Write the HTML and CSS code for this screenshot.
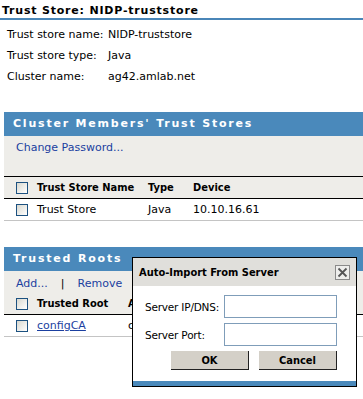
FILE: index.html
```html
<!DOCTYPE html>
<html>
<head>
<meta charset="utf-8">
<link rel="stylesheet" href="styles.css">
</head>
<body>
<div class="page">
  <h1 class="title">Trust Store: NIDP-truststore</h1>
  <div class="props">
    <div class="prop"><span class="label">Trust store name:</span><span class="value">NIDP-truststore</span></div>
    <div class="prop"><span class="label">Trust store type:</span><span class="value">Java</span></div>
    <div class="prop"><span class="label">Cluster name:</span><span class="value">ag42.amlab.net</span></div>
  </div>

  <section class="panel panel-cluster">
    <div class="panel-head">Cluster Members' Trust Stores</div>
    <div class="toolbar toolbar-tall"><a class="link">Change Password...</a></div>
    <div class="row head bordered">
      <span class="cb"></span><span class="c1">Trust Store Name</span><span class="c2">Type</span><span class="c3">Device</span>
    </div>
    <div class="row data">
      <span class="cb"></span><span class="c1">Trust Store</span><span class="c2">Java</span><span class="c3">10.10.16.61</span>
    </div>
  </section>

  <section class="panel panel-roots">
    <div class="panel-head">Trusted Roots</div>
    <div class="toolbar"><a class="link">Add...</a><span class="sep">|</span><a class="link">Remove</a><span class="sep">|</span></div>
    <div class="row head">
      <span class="cb"></span><span class="r1">Trusted Root</span><span class="r2">Alias</span>
    </div>
    <div class="row data">
      <span class="cb"></span><span class="r1"><a class="link ul">configCA</a></span><span class="r2">configCA</span>
    </div>
  </section>
</div>

<div class="dialog">
  <div class="dlg-title">
    <span>Auto-Import From Server</span>
    <span class="close"><svg width="11" height="11" viewBox="0 0 11 11"><path d="M1.5 1.5 L9.5 9.5 M9.5 1.5 L1.5 9.5" stroke="#555" stroke-width="1.8" fill="none"/></svg></span>
  </div>
  <div class="dlg-body">
    <div class="field"><span class="flabel">Server IP/DNS:</span><span class="input"></span></div>
    <div class="field"><span class="flabel">Server Port:</span><span class="input"></span></div>
    <div class="buttons"><span class="btn">OK</span><span class="btn">Cancel</span></div>
  </div>
  <div class="dlg-foot"></div>
</div>
</body>
</html>
```

FILE: styles.css
```css
html, body { margin: 0; padding: 0; background: #fff; }
body {
  font-family: "DejaVu Sans", Verdana, sans-serif;
  font-size: 11px;
  color: #000;
  position: relative;
  width: 363px;
  height: 399px;
  overflow: hidden;
}
.title {
  margin: 0;
  font-family: "DejaVu Sans", Verdana, sans-serif;
  font-size: 11px;
  font-weight: bold;
  letter-spacing: 0.8px;
  padding: 3px 0 0 2px;
  height: 15px;
  line-height: 15px;
  border-bottom: 2px solid #4a86b8;
}
.props { padding: 4px 0 0 7px; }
.prop { display: flex; height: 21px; align-items: center; }
.label { width: 101px; }
.panel { margin-left: 4px; }
.panel-cluster { margin-top: 25px; }
.panel-roots { margin-top: 26px; }
.panel-head {
  background: #4a89bb;
  color: #fff;
  font-weight: bold;
  font-size: 11px;
  letter-spacing: 1.8px;
  height: 24px;
  line-height: 24px;
  padding-left: 9px;
}
.toolbar {
  background: #eeede9;
  padding: 3px 0 0 12px;
  height: 19px;
  display: flex;
  align-items: center;
}
.toolbar-tall { height: 35px; align-items: flex-start; padding-top: 5px; }
.link { color: #1b3fa0; }
.ul { text-decoration: underline; }
.sep { margin: 0 13px; color: #000; }
.row { display: flex; align-items: center; height: 21px; }
.head {
  background: #eeede9;
  font-family: "DejaVu Sans Condensed", "DejaVu Sans", sans-serif;
  font-weight: bold;
  border-bottom: 1px solid #000;
}
.bordered { border-top: 1px solid #000; }
.data { border-bottom: 1px solid #c4c4c4; }
.cb {
  flex: none;
  width: 10px; height: 10px;
  border: 1px solid #1c5180;
  background: linear-gradient(135deg, #d8d8d0, #fff);
  margin-left: 12px;
  margin-right: 9px;
}
.c1 { width: 111px; white-space: nowrap; }
.c2 { width: 45px; }
.r1 { width: 91px; white-space: nowrap; }
.r2 { white-space: nowrap; }
.dialog {
  position: absolute;
  left: 132px;
  top: 257px;
  width: 223px;
  border: 1px solid #000;
  background: #fff;
}
.dlg-title {
  background: #e0dfdb;
  height: 28px;
  display: flex;
  align-items: center;
  justify-content: space-between;
  padding: 0 6px;
  font-family: "DejaVu Sans Condensed", "DejaVu Sans", sans-serif;
  font-weight: bold;
}
.close {
  width: 13px; height: 13px;
  border: 1px solid #8a8a8a;
  display: flex; align-items: center; justify-content: center;
  background: #eeeeec;
}
.dlg-body { padding: 9px 0 0 12px; }
.field { display: flex; align-items: center; height: 23px; margin-bottom: 5px; }
.flabel { width: 79px; flex: none; white-space: nowrap; font-size: 10.5px; letter-spacing: -0.2px; }
.input { flex: none; width: 111px; height: 21px; border: 1px solid #7f9db9; background: #fff; }
.buttons { display: flex; gap: 10px; margin: 3px 0 0 26px; height: 30px; }
.btn {
  width: 77px; height: 18px;
  background: #d4d0c8;
  border-right: 1px solid #222;
  border-bottom: 1px solid #222;
  font-family: "DejaVu Sans Condensed", "DejaVu Sans", sans-serif;
  font-weight: bold;
  display: flex; align-items: center; justify-content: center;
}
.dlg-foot { background: #4a89bb; height: 5px; }
```
